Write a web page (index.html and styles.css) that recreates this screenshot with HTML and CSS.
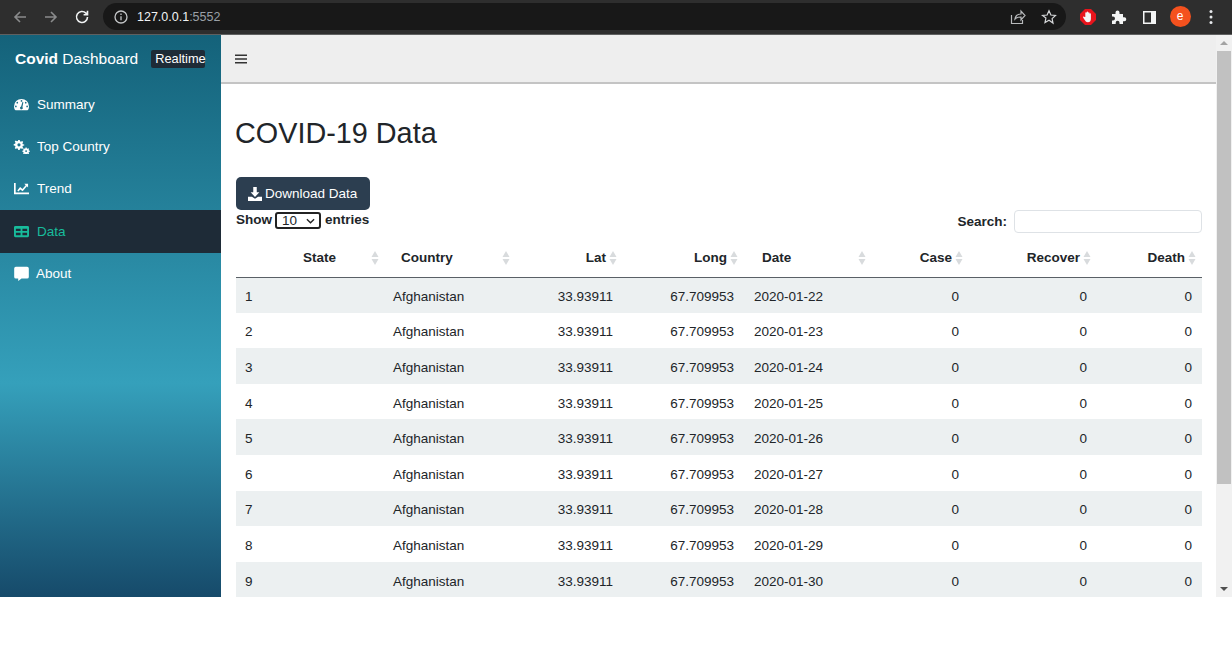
FILE: index.html
```html
<!DOCTYPE html>
<html lang="en">
<head>
    <meta charset="UTF-8">
    <title>Covid Dashboard</title>
    <link rel="stylesheet" href="styles.css">
</head>
<body>
    <header class="browser-bar">
        <svg class="bicon dim" viewBox="0 0 16 16"><path d="M14 8H3M8 3L3 8l5 5"/></svg>
        <svg class="bicon dim" viewBox="0 0 16 16"><path d="M2 8h11M8 3l5 5-5 5"/></svg>
        <svg class="bicon" viewBox="0 0 16 16"><path d="M13.5 8a5.5 5.5 0 1 1-1.6-3.9L13.500 5.700M13.500 1.800v3.900H9.600"/></svg>
        <div class="omnibox">
            <svg class="info" viewBox="0 0 14 14"><circle cx="7" cy="7" r="6"/><path d="M7 6.200v4M7 3.600v1.400"/></svg>
            <span class="url">127.0.0.1<span class="port">:5552</span></span>
            <svg class="share" viewBox="0 0 16 16"><path d="M1.500 6v8.500h11V11M5 10c.5-3.500 3-5 6-5V2l4 4.500L11 11V8c-2.500 0-4.500.5-6 2z"/></svg>
            <svg class="star" viewBox="0 0 16 16"><path d="M8 1.800l1.900 4.200 4.600.5-3.400 3.100.9 4.500L8 11.300 4 13.600l.9-4.500L1.500 6.500l4.600-.5z"/></svg>
        </div>
        <div class="ext-icons">
            <svg class="ext" viewBox="0 0 16 16"><path class="stop" d="M5 0h6l5 5v6l-5 5H5l-5-5V5z"/><path class="hand" d="M5.300 8V4a.7.7 0 0 1 1.400 0v-.8a.7.7 0 0 1 1.400 0V4a.7.7 0 0 1 1.400 0v1a.7.7 0 0 1 1.400 0v5c0 2-1.200 3.300-3 3.300-1.500 0-2.300-.8-3-2L3.200 8.800c-.5-.9.6-1.600 1.200-.9z"/></svg>
            <svg class="ext" viewBox="0 0 16 16"><path class="solid" d="M1 5h3.500V3.500a2 2 0 0 1 4 0V5H12v3.300h1.300a2 2 0 0 1 0 4H12V15H8.500v-1.300a1.900 1.900 0 0 0-3.800 0V15H1v-3.500h1a2 2 0 0 0 0-4H1z"/></svg>
            <svg class="ext last" viewBox="0 0 16 16"><path class="solid" d="M2 2h13v13H2zM3.500 3.500v10H10v-10z" fill-rule="evenodd"/></svg>
            <span class="avatar">e</span>
            <svg class="kebab" viewBox="0 0 4 16"><circle cx="2" cy="2.500" r="1.500"/><circle cx="2" cy="8" r="1.500"/><circle cx="2" cy="13.500" r="1.500"/></svg>
        </div>
    </header>

    <div class="viewport">
        <aside class="sidebar">
            <div class="brand">
                <span class="brand-name"><b>Covid</b> Dashboard</span>
                <span class="badge">Realtime</span>
            </div>
            <nav>
                <a class="nav-item">
                    <svg class="nav-icon" viewBox="0 0 16 16"><path fill-rule="evenodd" d="M8 2a8 8 0 0 0-8 8c0 1.300.3 2.500.9 3.500.2.300.5.500.8.500h12.600c.3 0 .6-.2.800-.5.6-1 .9-2.200.9-3.500a8 8 0 0 0-8-8zM8 3.300a.9.9 0 1 1 0 1.800.9.9 0 0 1 0-1.800zM3.500 5.100a.9.9 0 1 1 0 1.800.9.9 0 0 1 0-1.800zM2 9.100a.9.9 0 1 1 0 1.800.9.9 0 0 1 0-1.800zM14 9.100a.9.9 0 1 1 0 1.800.9.9 0 0 1 0-1.800zM12.500 5.100a.9.9 0 1 1 0 1.800.9.9 0 0 1 0-1.800zM10 5.500l-1 5.100a1.500 1.500 0 1 1-1.400-.4L9 5.300z"/></svg>
                    <span>Summary</span>
                </a>
                <a class="nav-item">
                    <svg class="nav-icon" viewBox="0 0 18 16"><path d="M5.500 1h1.600l.3 1.500 1 .4 1.300-.8 1.100 1.100-.8 1.300.4 1 1.500.3V7l-1.500.3-.4 1 .8 1.300-1.100 1.100-1.300-.8-1 .4-.3 1.500H5.500l-.3-1.500-1-.4-1.300.8-1.100-1.100.8-1.300-.4-1L.7 7V5.300l1.500-.3.4-1-.8-1.300 1.100-1.100 1.300.8 1-.4zM6.300 4.500a1.700 1.700 0 1 0 0 3.400 1.700 1.700 0 0 0 0-3.400z" fill-rule="evenodd"/><path d="M13.300 9h1.200l.2 1 .7.300.9-.5.800.8-.5.900.3.700 1 .2v1.200l-1 .2-.3.700.5.900-.8.800-.9-.5-.7.300-.2 1h-1.200l-.2-1-.7-.3-.9.500-.8-.8.5-.9-.3-.7-1-.2v-1.200l1-.2.3-.7-.5-.9.8-.8.900.5.700-.3zM13.900 11.900a1 1 0 1 0 0 2 1 1 0 0 0 0-2z" fill-rule="evenodd"/></svg>
                    <span>Top Country</span>
                </a>
                <a class="nav-item">
                    <svg class="nav-icon" viewBox="0 0 16 16"><path d="M0 2h1.800v10.200H16V14H0z"/><path d="M3.500 10l3-3.500 2.500 2L12.500 4.500 11 3h4v4l-1.300-1.300L9.200 11 6.700 9l-2 2.200z"/></svg>
                    <span>Trend</span>
                </a>
                <a class="nav-item active">
                    <svg class="nav-icon" viewBox="0 0 16 16"><path fill-rule="evenodd" d="M1.500 2h13A1.500 1.500 0 0 1 16 3.500v9a1.500 1.500 0 0 1-1.500 1.500h-13A1.500 1.500 0 0 1 0 12.500v-9A1.500 1.500 0 0 1 1.500 2zM2 5v2.500h5V5zM9 5v2.500h5V5zM2 9.300V12h5V9.300zM9 9.300V12h5V9.300z"/></svg>
                    <span>Data</span>
                </a>
                <a class="nav-item">
                    <svg class="nav-icon" viewBox="0 0 16 16"><path d="M2 .8h12a1.800 1.800 0 0 1 1.800 1.800v9A1.800 1.800 0 0 1 14 13.400H8l-3.500 2.600v-2.600H2A1.800 1.800 0 0 1 .2 11.600v-9A1.800 1.800 0 0 1 2 .8z"/></svg>
                    <span class="about-label">About</span>
                </a>
            </nav>
        </aside>

        <main class="content-wrap">
            <div class="topnav">
                <svg class="hamburger" viewBox="0 0 12 10"><path d="M0 .5h12v1.500H0zM0 4.200h12v1.500H0zM0 8h12v1.500H0z"/></svg>
            </div>
            <section class="content">
                <h1>COVID-19 Data</h1>
                <button class="download" type="button">
                    <svg viewBox="0 0 16 16"><path d="M6 0h4v6h3L8 11.500 3 6h3zM0 11h4.500L8 13.500 11.500 11H16v5H0z"/></svg>
                    Download Data
                </button>
                <div class="table-controls">
                    <div class="length">Show
                        <span class="select-box">10
                            <svg viewBox="0 0 10 6"><path d="M1 1l4 4 4-4"/></svg>
                        </span>
                        entries</div>
                    <label class="search">Search: <input type="text"></label>
                </div>
                <table class="data-table">
                    <colgroup>
                        <col class="c-id"><col class="c-state"><col class="c-country"><col class="c-lat"><col class="c-long"><col class="c-date"><col class="c-case"><col class="c-recover"><col class="c-death">
                    </colgroup>
                    <thead id="thead"></thead>
                    <tbody id="tbody"></tbody>
                </table>
            </section>
        </main>

        <div class="scrollbar">
            <span class="arrow up"></span>
            <span class="thumb"></span>
            <span class="arrow down"></span>
        </div>
    </div>

    <script>
        var sortIcon = '<svg class="sort" viewBox="0 0 8 14"><path d="M4 0l3.500 6h-7z"/><path d="M4 14L.5 8h7z"/></svg>';
        var headers = [
            ['', ''], ['State', 'left'], ['Country', 'left'], ['Lat', 'num'], ['Long', 'num'],
            ['Date', 'left'], ['Case', 'num'], ['Recover', 'num'], ['Death', 'num']
        ];

        var headHtml = '<tr>';
        headers.forEach(function(h) {
            if (h[0]) {
                headHtml += '<th><div class="th-in ' + h[1] + '"><span>' + h[0] + '</span>' + sortIcon + '</div></th>';
            } else {
                headHtml += '<th></th>';
            }
        });
        document.getElementById('thead').innerHTML = headHtml + '</tr>';

        var bodyHtml = '';
        for (var i = 1; i <= 9; i++) {
            var day = 21 + i;
            bodyHtml += '<tr><td>' + i + '</td><td></td><td>Afghanistan</td>' +
                '<td class="num">33.93911</td><td class="num">67.709953</td>' +
                '<td>2020-01-' + day + '</td>' +
                '<td class="num">0</td><td class="num">0</td><td class="num">0</td></tr>';
        }
        document.getElementById('tbody').innerHTML = bodyHtml;
    </script>
</body>
</html>
```

FILE: styles.css
```css
* {
    box-sizing: border-box;
}
html, body {
    height: 648px;
    margin: 0;
    overflow: hidden;
}
body {
    font-family: "Liberation Sans", Arial, sans-serif;
    font-size: 13.5px;
    color: #212529;
    background-color: #fff;
}

/* browser chrome */
.browser-bar {
    height: 35px;
    background-color: #2e2e2e;
    border-bottom: 1px solid #5f6060;
    display: flex;
    align-items: center;
    padding: 0 0 1px 12px;
}
.bicon {
    width: 16px;
    height: 16px;
    margin-right: 15px;
    fill: none;
    stroke: #f1f3f4;
    stroke-width: 1.6;
}
.bicon.dim {
    stroke: #8a8b8c;
}
.omnibox {
    width: 963px;
    height: 27px;
    margin-left: -2px;
    border-radius: 14px;
    background-color: #181818;
    display: flex;
    align-items: center;
    padding: 0 9px 0 11px;
}
.info {
    width: 14px;
    height: 14px;
    fill: none;
    stroke: #c4c6c8;
    stroke-width: 1.3;
}
.url {
    margin-left: 9px;
    flex: 1;
    font-size: 12.5px;
    color: #f1f3f4;
}
.port {
    color: #9aa0a6;
}
.share, .star {
    width: 16px;
    height: 16px;
    fill: none;
    stroke: #b8babc;
    stroke-width: 1.2;
}
.share {
    margin-right: 15px;
}
.star {
    stroke: #d5d7d9;
}
.ext-icons {
    display: flex;
    align-items: center;
    margin-left: 14px;
}
.ext {
    width: 16px;
    height: 16px;
    margin-right: 14.500px;
}
.ext.last {
    margin-right: 12.500px;
}
.stop {
    fill: #e8141c;
}
.hand, .solid {
    fill: #f4f5f5;
}
.avatar {
    width: 21px;
    height: 21px;
    border-radius: 50%;
    background-color: #f4511e;
    color: #fff;
    font-size: 12px;
    line-height: 21px;
    text-align: center;
}
.kebab {
    width: 4px;
    height: 16px;
    margin-left: 18px;
    fill: #e8eaed;
}

/* page */
.viewport {
    height: 562px;
    display: flex;
    overflow: hidden;
}
.sidebar {
    width: 221px;
    flex: none;
    background: linear-gradient(180deg, #14627a 0%, #35a0bb 62%, #164a6a 100%);
    color: #fff;
}
.brand {
    height: 48px;
    display: flex;
    align-items: center;
    padding-left: 15px;
}
.brand-name {
    font-size: 15.5px;
}
.badge {
    margin-left: 13px;
    padding-left: 4px;
    width: 54px;
    height: 18px;
    background-color: #1e2b37;
    border-radius: 2px;
    font-size: 12.800px;
    line-height: 18px;
    white-space: nowrap;
}
.nav-item {
    height: 42.400px;
    display: flex;
    align-items: center;
    padding-left: 13px;
    color: #fff;
}
.nav-item.active {
    background-color: #1e2b37;
    color: #18bc9c;
}
.nav-icon {
    width: 17px;
    height: 15px;
    margin-right: 7px;
    fill: currentColor;
    flex: none;
}
.about-label {
    margin-left: -1px;
}

.content-wrap {
    width: 995px;
    flex: none;
}
.topnav {
    height: 49px;
    background-color: #eee;
    border-bottom: 2px solid #c4c4c4;
    display: flex;
    align-items: center;
    padding-left: 14px;
}
.hamburger {
    width: 12px;
    height: 10px;
    fill: #333;
}
.content {
    padding: 32px 14px 0 15px;
}
h1 {
    margin: 0 0 27px -1px;
    font-size: 28.800px;
    font-weight: 400;
    line-height: 34px;
}
.download {
    display: flex;
    align-items: center;
    width: 134px;
    height: 33px;
    padding: 0 0 0 12px;
    border: none;
    border-radius: 5px;
    background-color: #2c3e50;
    color: #fff;
    font: inherit;
    white-space: nowrap;
}
.download svg {
    width: 14px;
    height: 14px;
    margin-right: 3px;
    fill: #fff;
}
.table-controls {
    display: flex;
    justify-content: space-between;
    align-items: flex-start;
    font-weight: 700;
}
.length {
    margin-top: 1px;
    display: flex;
    align-items: center;
    gap: 3px;
    height: 17px;
}
.select-box {
    width: 46px;
    height: 17px;
    margin: 2px 1px 0 0;
    padding: 0 4px 0 5px;
    border: 2px solid #222;
    border-radius: 3px;
    display: flex;
    align-items: center;
    justify-content: space-between;
    font-weight: 400;
}
.select-box svg {
    width: 9px;
    height: 6px;
    fill: none;
    stroke: #222;
    stroke-width: 1.5;
}
.search {
    display: flex;
    align-items: center;
}
.search input {
    width: 188px;
    height: 23px;
    margin: 0 0 0 7px;
    border: 1px solid #dee2e6;
    border-radius: 4px;
}
.data-table {
    width: 966px;
    margin-top: 4px;
    border-collapse: collapse;
    table-layout: fixed;
}
.c-id { width: 49px; }
.c-state { width: 98px; }
.c-country { width: 131px; }
.c-lat { width: 109px; }
.c-long { width: 121px; }
.c-date { width: 126px; }
.c-case { width: 99px; }
.c-recover { width: 128px; }
.c-death { width: 105px; }
.data-table th {
    height: 40px;
    padding: 2px 4px 0 18px;
    border-bottom: 1px solid #5a6066;
    font-weight: 700;
}
.th-in {
    display: flex;
    align-items: center;
}
.th-in.left {
    justify-content: space-between;
}
.th-in.num {
    justify-content: flex-end;
    gap: 3px;
    margin-right: 2px;
}
.sort {
    width: 8px;
    height: 14px;
    fill: #d8dbdd;
    flex: none;
}
.data-table td {
    height: 35.600px;
    padding: 3px 10px 0;
    white-space: nowrap;
}
.data-table td:first-child {
    padding-left: 9px;
}
.data-table td.num {
    text-align: right;
}
.data-table tbody tr:nth-child(odd) {
    background-color: #ecf0f1;
}

.scrollbar {
    flex: 1;
    background-color: #f1f1f1;
    display: flex;
    flex-direction: column;
    align-items: center;
}
.arrow {
    flex: none;
    width: 0;
    height: 0;
    border-left: 4px solid transparent;
    border-right: 4px solid transparent;
}
.arrow.up {
    margin: 6px 0 6px;
    border-bottom: 4px solid #a3a3a3;
}
.arrow.down {
    margin: auto 0 6px;
    border-top: 4px solid #505050;
}
.thumb {
    width: 14px;
    height: 433px;
    background-color: #c1c1c1;
}
```
